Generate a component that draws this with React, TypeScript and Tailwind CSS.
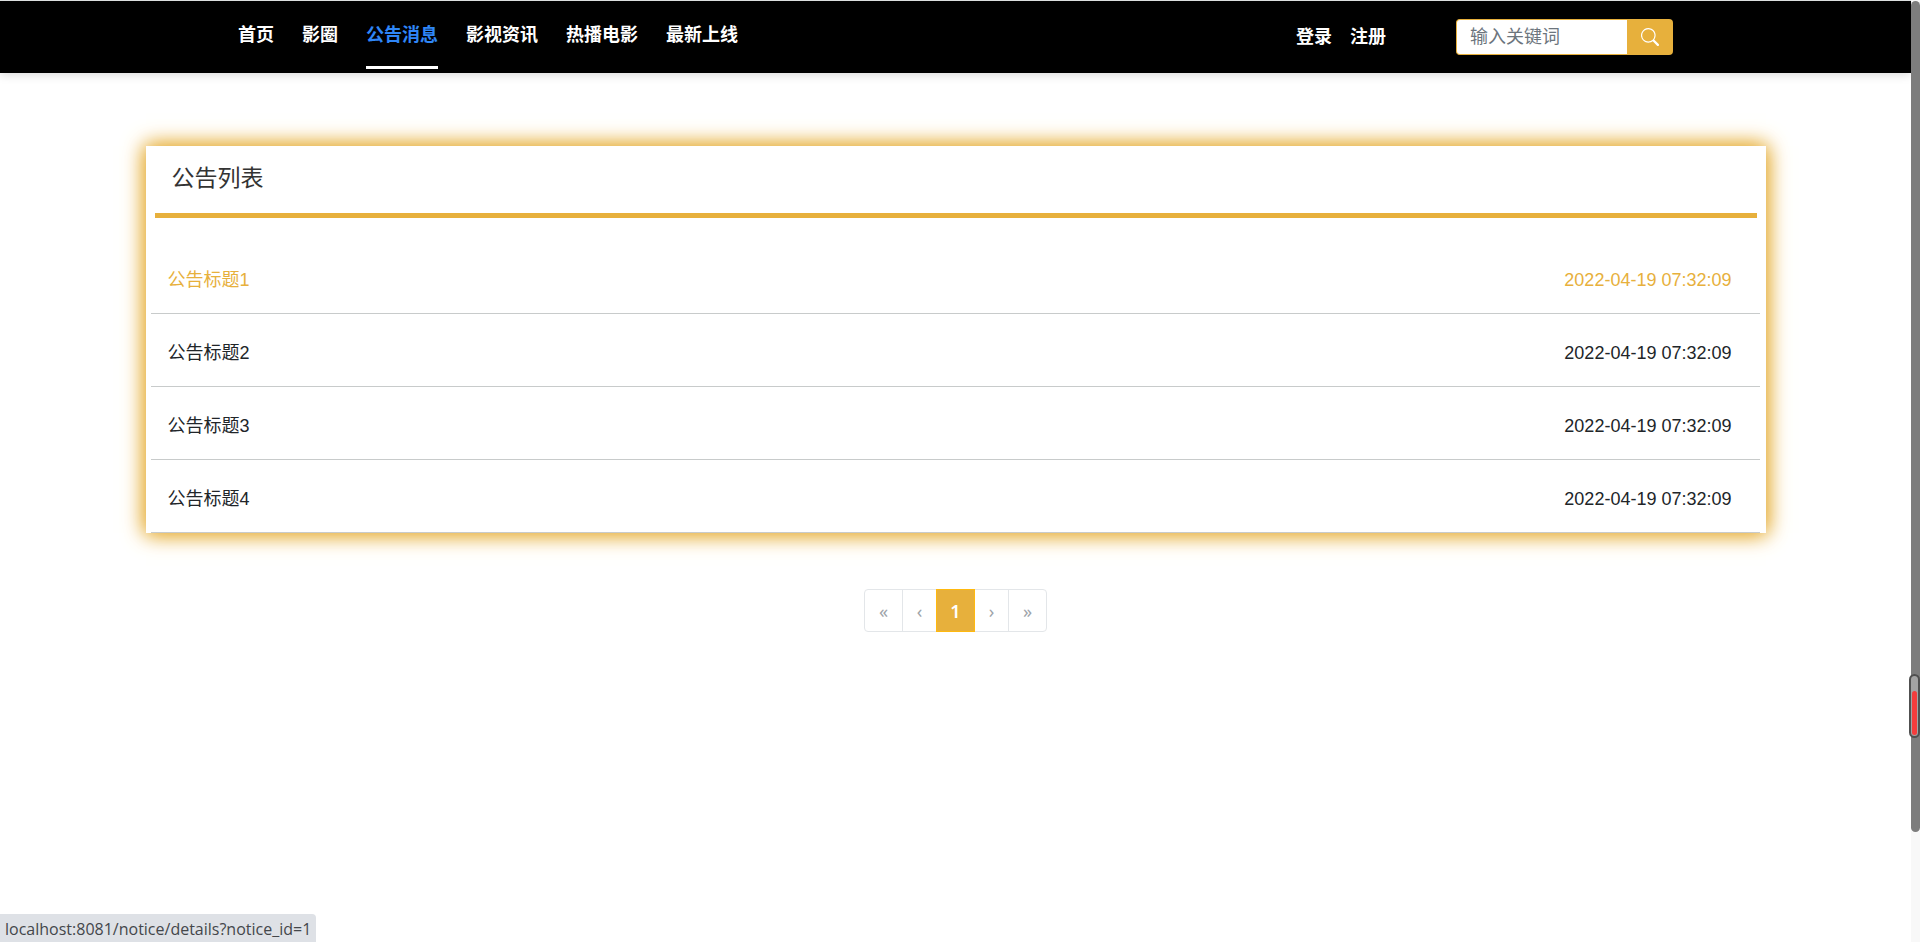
const navItems = ["首页", "影圈", "公告消息", "影视资讯", "热播电影", "最新上线"];

const notices = [
  { id: 1, title: "公告标题1", time: "2022-04-19 07:32:09" },
  { id: 2, title: "公告标题2", time: "2022-04-19 07:32:09" },
  { id: 3, title: "公告标题3", time: "2022-04-19 07:32:09" },
  { id: 4, title: "公告标题4", time: "2022-04-19 07:32:09" },
];

function SearchIcon() {
  return (
    <svg width="18" height="18" viewBox="0 0 16 16" fill="currentColor" aria-hidden="true">
      <path d="M11.742 10.344a6.5 6.5 0 1 0-1.397 1.398h-.001c.03.04.062.078.098.115l3.85 3.85a1 1 0 0 0 1.415-1.414l-3.85-3.85a1.007 1.007 0 0 0-.115-.1zM12 6.5a5.5 5.5 0 1 1-11 0 5.5 5.5 0 0 1 11 0z" />
    </svg>
  );
}

function Header() {
  return (
    <header className="border-t border-[#dcdfdf] bg-black shadow-[0_2px_9px_rgba(0,0,0,0.15)]">
      <div className="mx-auto flex h-[72px] max-w-[1435px] items-start text-lg font-bold text-white">
        <nav className="flex gap-7">
          {navItems.map((item) => (
            <a
              key={item}
              href="#"
              className={
                item === "公告消息"
                  ? "h-[68px] border-b-3 border-white pt-[21px] leading-[27px] text-[#2f86f6]"
                  : "h-[68px] pt-[21px] leading-[27px]"
              }
            >
              {item}
            </a>
          ))}
        </nav>
        <div className="ml-auto flex h-[72px] items-center">
          <div className="mr-[70px] flex gap-[18px]">
            <a href="#">登录</a>
            <a href="#">注册</a>
          </div>
          <form className="flex h-9" role="search">
            <input
              type="text"
              aria-label="输入关键词"
              placeholder="输入关键词"
              className="w-[171px] rounded-l border border-r-0 border-[#e7b03c] bg-white px-[13px] text-lg font-normal text-gray-800 placeholder:text-[#6c757d]"
            />
            <button
              type="button"
              aria-label="搜索"
              className="flex w-[46px] items-center justify-center rounded-r bg-[#e7b03c] text-white"
            >
              <SearchIcon />
            </button>
          </form>
        </div>
      </div>
    </header>
  );
}

function NoticeList() {
  return (
    <section className="mx-auto mt-[73px] max-w-[1620px] bg-white shadow-[0_0_18px_#e7b03c,0_0_22px_#e7b03c]">
      <div className="px-[9px]">
        <h1 className="border-b-5 border-[#e7b03c] px-[17px] pt-[15px] pb-[18px] text-[23px] leading-[34px] font-normal text-[#333333]">
          公告列表
        </h1>
      </div>
      <ul className="pt-[23px] pr-[6px] pl-[5px]">
        {notices.map((n) => (
          <li key={n.id} className="border-b border-[#c8cbcb]">
            <a
              href="#"
              className={
                n.id === 1
                  ? "flex justify-between pt-[26px] pr-7 pb-[19px] pl-[17px] text-lg leading-[27px] text-[#e7b03c]"
                  : "flex justify-between pt-[26px] pr-7 pb-[19px] pl-[17px] text-lg leading-[27px] text-[#212529]"
              }
            >
              <span>{n.title}</span>
              <time>{n.time}</time>
            </a>
          </li>
        ))}
      </ul>
    </section>
  );
}

function Pagination() {
  return (
    <nav
      aria-label="分页"
      className="mt-14 flex justify-center font-['Noto_Sans',sans-serif] text-lg text-[#9da3a9]"
    >
      <button className="h-[43px] w-[39px] rounded-l border border-[#e3e6e9]">«</button>
      <button className="-ml-px h-[43px] w-[35px] border border-[#e3e6e9]">‹</button>
      <button className="z-10 -ml-px h-[43px] w-[39px] border border-[#ffb90f] bg-[#e7b03c] font-semibold text-white">1</button>
      <button className="-ml-px h-[43px] w-[35px] border border-[#e3e6e9]">›</button>
      <button className="-ml-px h-[43px] w-[39px] rounded-r border border-[#e3e6e9]">»</button>
    </nav>
  );
}

function ScrollRail() {
  return (
    <div className="fixed inset-y-0 right-0 w-[9px] bg-[#f8f8f8]" aria-hidden="true">
      <div className="mt-px h-[88.2%] rounded-full bg-[#7d7d7d]" />
      <div className="absolute top-[71.5%] right-0 flex h-16 w-[11px] items-end rounded-full border-2 border-[#505050] bg-[#a3a3a3] px-px pb-px">
        <div className="h-11 w-full rounded-full bg-[#f43c3c]" />
      </div>
    </div>
  );
}

export default function App() {
  return (
    <div className="min-h-screen bg-white pr-[9px] font-['Liberation_Sans','Noto_Sans_CJK_SC',sans-serif]">
      <Header />
      <main>
        <NoticeList />
        <Pagination />
      </main>
      <div className="fixed bottom-0 left-0 h-7 rounded-tr bg-[#dee1e6] pr-[5px] pl-[5px] font-['Open_Sans','Noto_Sans',sans-serif] text-base leading-[30px] text-[#44474b]">
        localhost:8081/notice/details?notice_id=1
      </div>
      <ScrollRail />
    </div>
  );
}
